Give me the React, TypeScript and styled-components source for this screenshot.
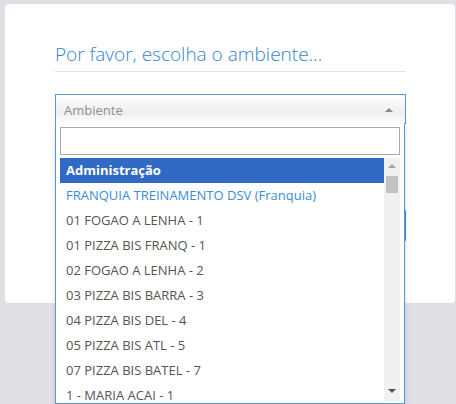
import styled, { createGlobalStyle } from "styled-components";

const GlobalStyle = createGlobalStyle`
  html, body {
    margin: 0;
    padding: 0;
    background: #dfe0e5;
    font-family: "Open Sans", "Noto Sans", sans-serif;
    overflow: hidden;
  }
`;

const ambientes = [
  "01 FOGAO A LENHA - 1",
  "01 PIZZA BIS FRANQ - 1",
  "02 FOGAO A LENHA - 2",
  "03 PIZZA BIS BARRA - 3",
  "04 PIZZA BIS DEL - 4",
  "05 PIZZA BIS ATL - 5",
  "07 PIZZA BIS BATEL - 7",
  "1 - MARIA ACAI - 1",
  "10 PIZZA BIS - 10",
];

export default function App() {
  return (
    <>
      <GlobalStyle />
      <Page>
        <Card>
          <Title>Por favor, escolha o ambiente...</Title>
          <Select>
            <SelectHead>
              <span className="placeholder">Ambiente</span>
              <ArrowUp />
            </SelectHead>
            <Dropdown>
              <Search type="text" />
              <Results>
                <List>
                  <Item $active>Administração</Item>
                  <Item $group>FRANQUIA TREINAMENTO DSV (Franquia)</Item>
                  {ambientes.map((a) => (
                    <Item key={a}>{a}</Item>
                  ))}
                </List>
                <ScrollTrack>
                  <TrackArrow $dir="up" />
                  <Thumb />
                  <Spacer />
                  <TrackArrow $dir="down" />
                </ScrollTrack>
              </Results>
            </Dropdown>
          </Select>
          <Button>Entrar</Button>
        </Card>
      </Page>
    </>
  );
}

const Page = styled.div`
  padding: 4px 1px 0 5px;
  height: 404px;
  box-sizing: border-box;
`;

const Card = styled.div`
  background: #fff;
  border-radius: 4px;
  height: 299px;
  box-sizing: border-box;
  padding: 38px 49px 0 50px;
  display: flex;
  flex-direction: column;
`;

const Title = styled.h3`
  margin: 0;
  font-size: 19px;
  line-height: 24px;
  font-weight: 300;
  color: #2f86cf;
  padding-bottom: 5px;
  border-bottom: 1px solid #dde3ea;
`;

const Select = styled.div`
  position: relative;
  margin-top: 22px;
`;

const SelectHead = styled.div`
  height: 29px;
  border: 1px solid #5897d1;
  border-bottom: none;
  background: linear-gradient(to bottom, #fff 0%, #eee 60%, #fff 100%);
  display: flex;
  align-items: center;
  justify-content: space-between;
  padding: 0 12px 0 8px;

  .placeholder {
    font-size: 13px;
    color: #8f8f8f;
  }
`;

const ArrowUp = styled.span`
  width: 0;
  height: 0;
  border-left: 4px solid transparent;
  border-right: 4px solid transparent;
  border-bottom: 4px solid #888;
`;

const Dropdown = styled.div`
  position: absolute;
  top: 29px;
  left: 0;
  right: 1px;
  z-index: 2;
  background: #fff;
  border: 1px solid #5897d1;
  border-top: none;
  padding: 4px 4px 2px;
  box-shadow: 0 4px 5px rgba(0, 0, 0, 0.15);
`;

const Search = styled.input`
  display: block;
  width: 100%;
  box-sizing: border-box;
  height: 28px;
  margin: 0;
  border: 1px solid #aaa;
  outline: none;
  background: #fff;
`;

const Results = styled.div`
  display: flex;
  margin-top: 3px;
  height: 243px;
  overflow: hidden;
`;

const List = styled.ul`
  list-style: none;
  margin: 0;
  padding: 0;
  flex: 1;
  overflow: hidden;
`;

const Item = styled.li<{ $active?: boolean; $group?: boolean }>`
  height: 25px;
  line-height: 25px;
  padding-left: 6px;
  font-size: 13px;
  white-space: nowrap;
  color: ${(p) => (p.$active ? "#fff" : p.$group ? "#3a8dd3" : "#555")};
  background: ${(p) => (p.$active ? "#316ac5" : "transparent")};
  font-weight: ${(p) => (p.$active ? 700 : 400)};
`;

const ScrollTrack = styled.div`
  width: 16px;
  background: #f0f0f0;
  display: flex;
  flex-direction: column;
  align-items: center;
  padding: 6px 0 8px;
  box-sizing: border-box;
`;

const TrackArrow = styled.span<{ $dir: "up" | "down" }>`
  width: 0;
  height: 0;
  border-left: 4px solid transparent;
  border-right: 4px solid transparent;
  ${(p) =>
    p.$dir === "up"
      ? "border-bottom: 4px solid #a3a3a3;"
      : "border-top: 4px solid #505050;"}
`;

const Thumb = styled.div`
  width: 12px;
  height: 17px;
  margin-top: 8px;
  background: #c1c1c1;
`;

const Spacer = styled.div`
  flex: 1;
`;

const Button = styled.button`
  margin-top: 85px;
  height: 33px;
  border: none;
  border-radius: 3px;
  background: #3a8dd3;
  color: #fff;
  font-family: inherit;
  font-size: 14px;
`;
